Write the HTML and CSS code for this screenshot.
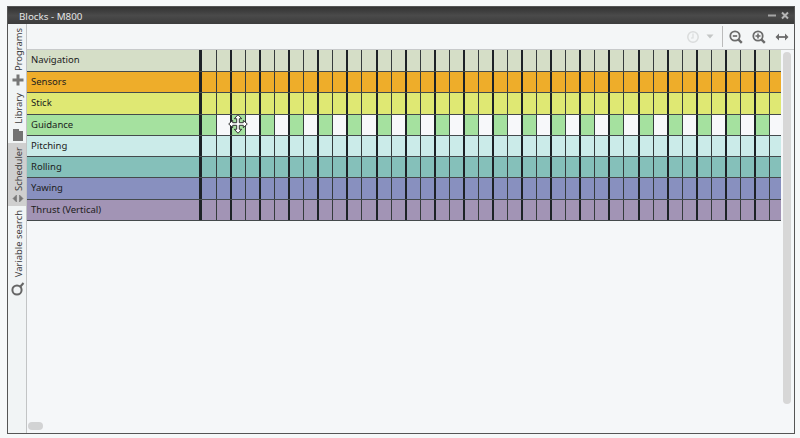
FILE: index.html
```html
<!DOCTYPE html>
<html>
<head>
    <meta charset="utf-8">
    <title>Blocks - M800</title>
    <link rel="stylesheet" href="styles.css">
</head>
<body>
    <div class="window">
        <div class="titlebar">
            <span>Blocks - M800</span>
            <svg class="controls" width="24" height="12" viewBox="0 0 24 12">
                <path d="M1 5.5h8" stroke="#a5a5a5" stroke-width="2" />
                <path d="M15 2.5l6 6M21 2.5l-6 6" stroke="#b5b5b5" stroke-width="2" />
            </svg>
        </div>
        <div class="content">
            <div class="tabs">
                <div class="tab programs">
                    <span>Programs</span>
                    <svg width="12" height="12" viewBox="0 0 12 12"><path d="M6 0.5v11M0.5 6h11" stroke="#777" stroke-width="3" /></svg>
                </div>
                <div class="tab library">
                    <span>Library</span>
                    <svg width="12" height="12" viewBox="0 0 12 12"><path d="M1 0h6v2h4v10H1z" fill="#737373" /></svg>
                </div>
                <div class="tab scheduler">
                    <span>Scheduler</span>
                    <svg width="12" height="9" viewBox="0 0 12 9"><path d="M4.5 1v7L1 4.5zM7.5 1v7L11 4.5z" fill="#777" stroke="#777" stroke-width="0.6" /></svg>
                </div>
                <div class="tab search">
                    <span>Variable search</span>
                    <svg width="14" height="14" viewBox="0 0 14 14"><circle cx="6" cy="8" r="4.6" fill="none" stroke="#666" stroke-width="2" /><path d="M9 5l3.5-4" stroke="#666" stroke-width="2" /></svg>
                </div>
            </div>
            <div class="main">
                <div class="toolbar">
                    <svg class="clock" width="14" height="14" viewBox="0 0 14 14"><circle cx="7" cy="7" r="5.2" fill="none" stroke="#dadcdc" stroke-width="1.5" /><path d="M7 3.5V8h-2" fill="none" stroke="#dadcdc" stroke-width="1.2" /></svg>
                    <svg class="arrow" width="8" height="5" viewBox="0 0 8 5"><path d="M0.5 0.5h7L4 4.5z" fill="#c4c6c6" /></svg>
                    <div class="separator"></div>
                    <svg class="zoom-out" width="14" height="14" viewBox="0 0 14 14"><circle cx="6" cy="6" r="4.7" fill="none" stroke="#6b6b6b" stroke-width="1.8" /><path d="M3.8 6h4.4" stroke="#6b6b6b" stroke-width="1.7" /><path d="M9.3 9.3l3.5 3.5" stroke="#6b6b6b" stroke-width="2.4" /></svg>
                    <svg class="zoom-in" width="14" height="14" viewBox="0 0 14 14"><circle cx="6" cy="6" r="4.7" fill="none" stroke="#6b6b6b" stroke-width="1.8" /><path d="M3.5 6h5M6 3.5v5" stroke="#6b6b6b" stroke-width="1.6" /><path d="M9.3 9.3l3.5 3.5" stroke="#6b6b6b" stroke-width="2.4" /></svg>
                    <svg class="fit" width="14" height="8" viewBox="0 0 14 8"><path d="M2 4h10" stroke="#6b6b6b" stroke-width="1.8" /><path d="M4 0.5L0.5 4 4 7.5zM10 0.5L13.5 4 10 7.5z" fill="#6b6b6b" /></svg>
                </div>
                <div class="view">
                    <div class="schedule" id="schedule">
                        <div class="row navigation"><div class="name">Navigation</div></div>
                        <div class="row sensors"><div class="name">Sensors</div></div>
                        <div class="row stick"><div class="name">Stick</div></div>
                        <div class="row guidance"><div class="name">Guidance</div></div>
                        <div class="row pitching"><div class="name">Pitching</div></div>
                        <div class="row rolling"><div class="name">Rolling</div></div>
                        <div class="row yawing"><div class="name">Yawing</div></div>
                        <div class="row thrust"><div class="name">Thrust (Vertical)</div></div>
                    </div>
                    <div class="vscroll"></div>
                </div>
                <div class="hscroll"></div>
            </div>
        </div>
    </div>
    <svg class="cursor" width="20" height="20" viewBox="0 0 20 20">
        <path d="M10 0.7l3.7 4h-2.4v4h4V6.3l4 3.7-4 3.7v-2.4h-4v4h2.4l-3.7 4-3.7-4h2.4v-4h-4v2.4L0.7 10l4-3.7v2.4h4v-4H6.3z" fill="#fff" stroke="#333" />
    </svg>

    <script>
        // every frame has two slots
        var rows = document.querySelectorAll('#schedule .row');
        for (var i = 0; i < rows.length; i++) {
            for (var j = 0; j < 20; j++) {
                var frame = document.createElement('div');
                frame.className = 'frame';
                frame.innerHTML = '<div class="slot"></div><div class="slot"></div>';
                rows[i].appendChild(frame);
            }
        }
    </script>
</body>
</html>
```
FILE: styles.css
```css
* {
    box-sizing: border-box;
}

body {
    margin: 0;
    padding: 6px 5px 4px 7px;
    height: 438px;
    overflow: hidden;
    background-color: #f6f8f9;
    color: #202020;
    font-family: "Noto Sans", "Open Sans", sans-serif;
    font-size: 9.5px;
}

svg {
    display: block;
    flex: none;
}

.window {
    display: flex;
    flex-direction: column;
    height: 428px;
    border: 1px solid #555;
    background-color: #f5f7f9;
}

.titlebar {
    display: flex;
    align-items: center;
    justify-content: space-between;
    flex: none;
    height: 17px;
    padding: 1px 7px 0 11px;
    background: linear-gradient(#333, #4a4a4a 50%, #3c3c3c);
    color: #e4e4e4;
    font-size: 9.8px;
}

.controls {
    margin-right: -4px;
}

.content {
    display: flex;
    flex: 1;
    min-height: 0;
}

.tabs {
    width: 19px;
    flex: none;
    border-right: 1px solid #c2c4c5;
    background-color: #f1f4f5;
}

.tab {
    display: flex;
    flex-direction: column;
    align-items: center;
    justify-content: space-between;
    padding: 4px 0 2px 2px;
}

.tab span {
    writing-mode: vertical-rl;
    transform: rotate(180deg);
    line-height: 13px;
    font-size: 9.4px;
    color: #3c3c3c;
    white-space: nowrap;
}

.programs {
    height: 64px;
}

.library {
    height: 55px;
    padding-top: 5px;
}

.scheduler {
    height: 63px;
    padding-bottom: 3px;
    background-color: #cfcfcf;
}

.search {
    height: 92px;
}

.main {
    display: flex;
    flex-direction: column;
    flex: 1;
    min-width: 0;
}

.toolbar {
    display: flex;
    align-items: center;
    justify-content: flex-end;
    flex: none;
    height: 26px;
    padding-right: 5px;
    border-bottom: 1px solid #c8cacb;
    background-color: #f4f6f7;
}

.arrow {
    margin-left: 6px;
}

.separator {
    width: 1px;
    height: 21px;
    margin: 0 6px 0 8px;
    background-color: #bbb;
}

.zoom-in,
.fit {
    margin-left: 9px;
}

.view {
    display: flex;
    flex: 1;
    min-height: 0;
}

.schedule {
    width: 754px;
    flex: none;
}

.row {
    display: flex;
    height: 21.3px;
    overflow: hidden;
    border-bottom: 1px solid #444a4c;
}

.row.navigation {
    height: 22px;
}

.name {
    width: 172px;
    flex: none;
    padding-left: 4px;
    line-height: 20px;
    white-space: nowrap;
}

.frame {
    display: flex;
    width: 29.12px;
    flex: none;
    border-left: 2px solid #1d2226;
}

.name + .frame {
    width: 31px;
    border-left-width: 3px;
}

.slot:first-child {
    width: 13px;
    flex: none;
}

.name + .frame .slot:first-child {
    width: 14px;
}

.slot:last-child {
    flex: 1;
    border-left: 1px solid #343b3c;
}

.navigation { background-color: #d5dec7; }
.sensors { background-color: #eead2a; }
.stick { background-color: #dfe873; }
.guidance { background-color: #a5e19f; }
.pitching { background-color: #cbebe9; }
.rolling { background-color: #85c0ba; }
.yawing { background-color: #8890bf; }
.thrust { background-color: #a294b5; }

.guidance .slot:last-child {
    background-color: #f7f8fa;
}

.vscroll {
    width: 8px;
    height: 352px;
    margin: 2px 0 0 2px;
    border-radius: 4px;
    background-color: #d7d7d7;
}

.hscroll {
    width: 15px;
    height: 8px;
    flex: none;
    margin: 0 0 3px 1px;
    border-radius: 4px;
    background-color: #d2d3d4;
}

/* move cursor floats over the grid */
.cursor {
    position: absolute;
    left: 228px;
    top: 114px;
}
```
